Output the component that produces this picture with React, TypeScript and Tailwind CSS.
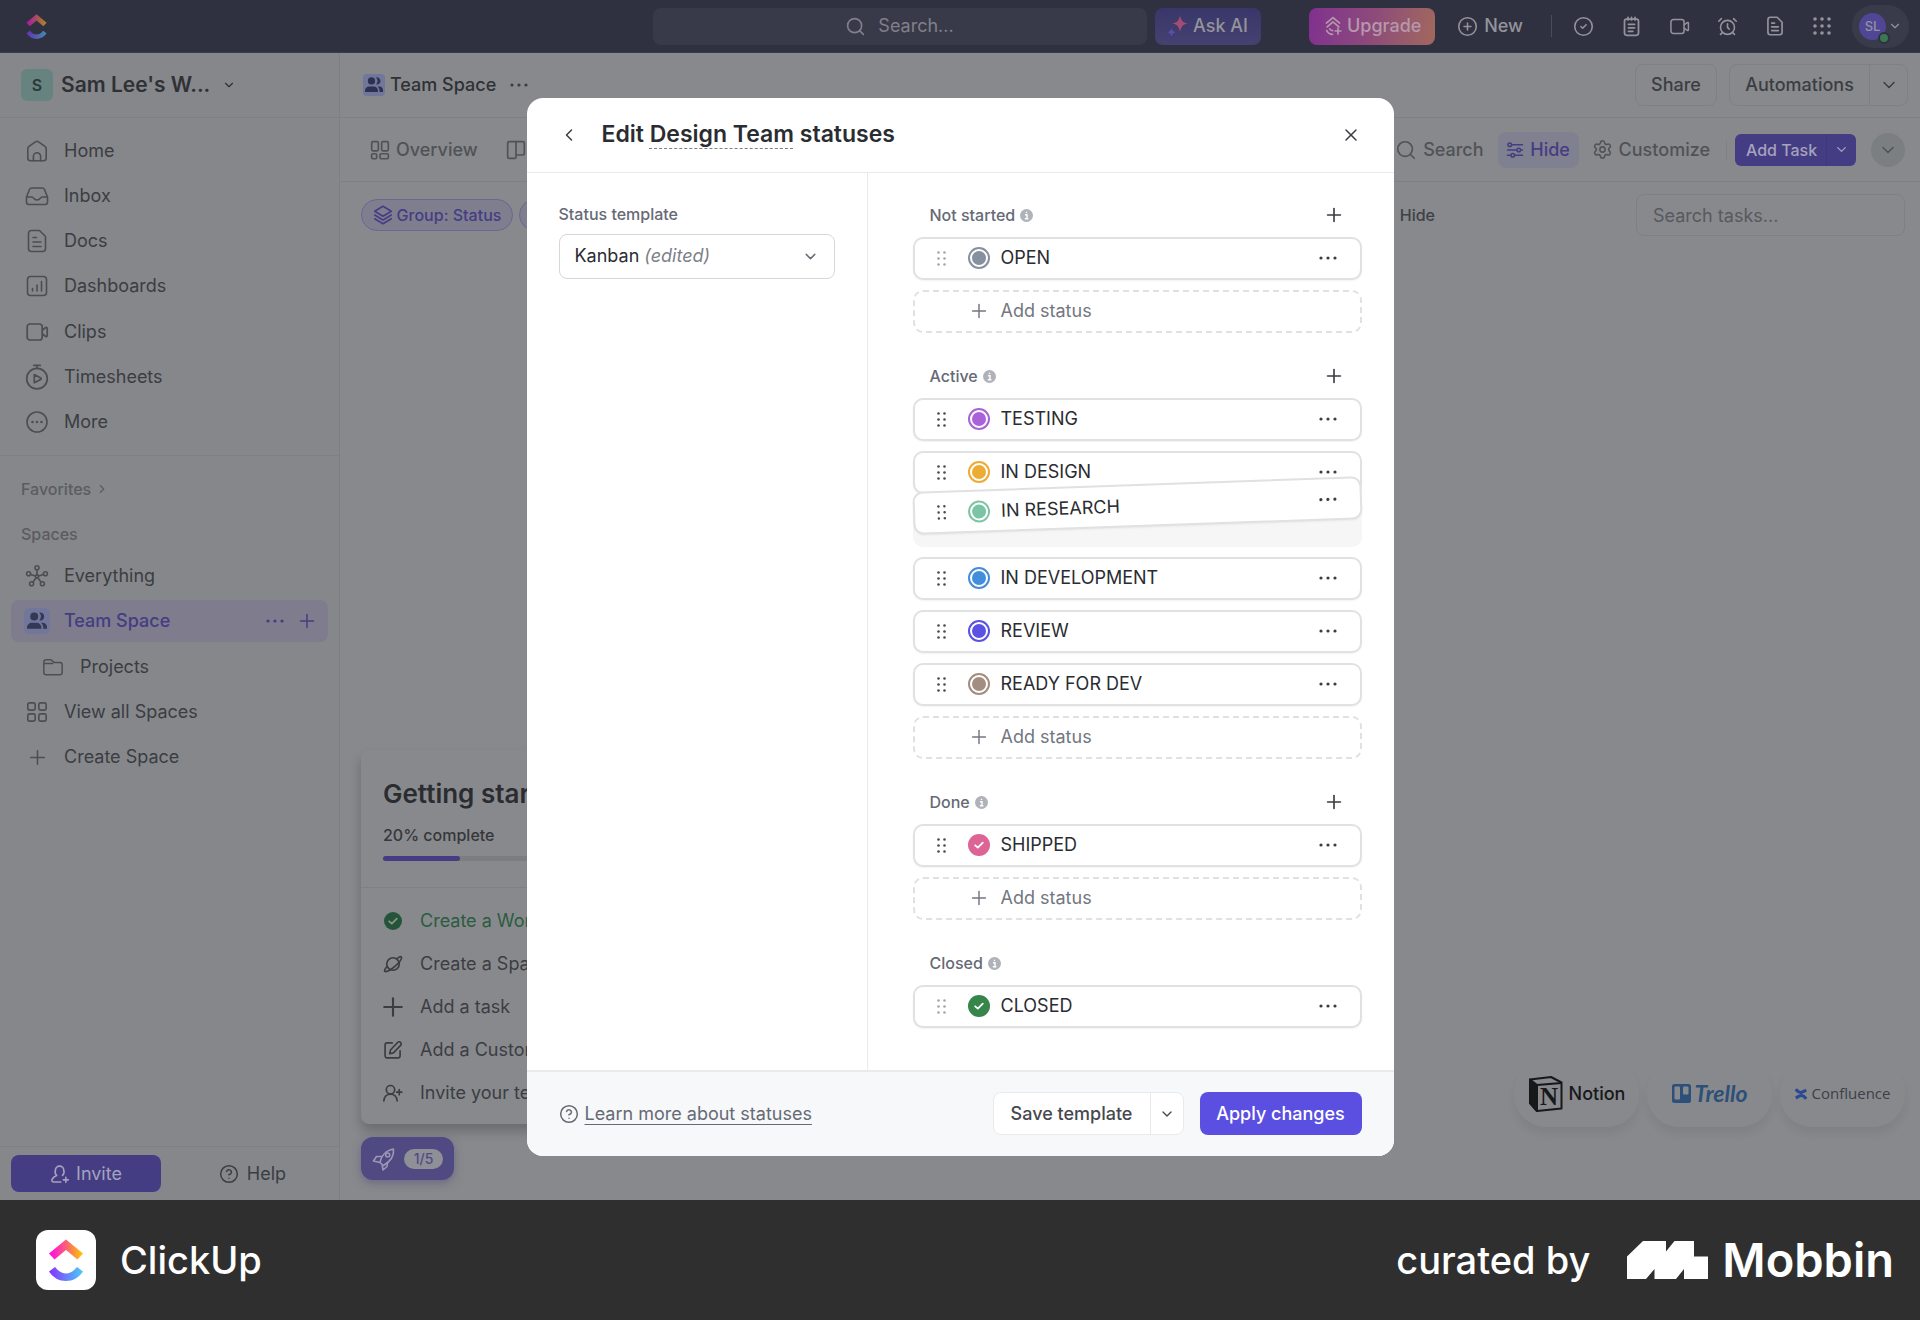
import { ReactNode } from "react";
import {
  AlarmClock,
  ChevronDown,
  ChevronLeft,
  ChevronRight,
  CircleCheck,
  CircleHelp,
  CirclePlus,
  Plus,
  Search,
  Settings,
  X
} from "lucide-react";

function Icon({ size = 24, stroke = 2, children }: { size?: number; stroke?: number; children: ReactNode }) {
  return (
    <svg
      width={size}
      height={size}
      viewBox="0 0 24 24"
      fill="none"
      stroke="currentColor"
      strokeWidth={stroke}
      strokeLinecap="round"
      strokeLinejoin="round"
      className="shrink-0"
      aria-hidden="true"
    >
      {children}
    </svg>
  );
}

const HomeIcon = () => (
  <Icon stroke={1.6}>
    <path d="M2.8 9.8a3 3 0 0 1 1.500-2.600l6.200-4.400a2.600 2.600 0 0 1 3 0l6.200 4.400a3 3 0 0 1 1.500 2.600V19a2.8 2.8 0 0 1-2.8 2.8H5.6A2.8 2.8 0 0 1 2.8 19z" />
    <path d="M8.400 21.800v-4.500a3.600 3.600 0 0 1 7.200 0v4.500" />
  </Icon>
);

const InboxIcon = () => (
  <Icon stroke={1.6}>
    <path d="m1.5 13 3-7.5A2.5 2.5 0 0 1 6.8 4h10.4a2.5 2.5 0 0 1 2.3 1.5l3 7.5v5a2.5 2.5 0 0 1-2.5 2.500H4A2.5 2.5 0 0 1 1.5 18z" />
    <path d="M1.7 13h5.1c1 0 1.3.4 1.8 1.2.8 1.3 1.7 1.8 3.4 1.8s2.6-.5 3.4-1.8c.5-.8.8-1.2 1.8-1.2h5.1" />
  </Icon>
);

const DocIcon = ({ size = 24, stroke = 1.6 }: { size?: number; stroke?: number }) => (
  <Icon size={size} stroke={stroke}>
    <path d="M3.5 4.5A3 3 0 0 1 6.500 1.500h8l6 6v12a3 3 0 0 1-3 3h-11a3 3 0 0 1-3-3z" />
    <path d="M8 8.500h3.500M8 13h8M8 17.500h8" />
  </Icon>
);

const DashboardIcon = () => (
  <Icon stroke={1.6}>
    <rect x="2.5" y="2.5" width="19" height="19" rx="3" />
    <path d="M7.500 14.500v2.500M12 11v6M16.500 7.500V17" />
  </Icon>
);

const ClipIcon = ({ size = 24 }: { size?: number }) => (
  <Icon size={size} stroke={1.7}>
    <rect x="2.2" y="4" width="15" height="16" rx="2.8" />
    <path d="m17.500 10 3.300-2.500c.6-.4 1.400 0 1.400.8v7.400c0 .8-.8 1.200-1.400.8L17.500 14" />
  </Icon>
);

const TimesheetIcon = () => (
  <Icon size={26} stroke={1.6}>
    <circle cx="12" cy="13.5" r="9.5" />
    <path d="M9 1.200h6M12 1.500V4" />
    <path d="m9.500 9.800 6 3.200a.7.7 0 0 1 0 1.200l-6 3.200z" />
  </Icon>
);

const MoreIcon = () => (
  <Icon stroke={1.6}>
    <circle cx="12" cy="12" r="10" />
    <path strokeWidth="2.6" d="M7.500 12h0M12 12h0M16.500 12h0" />
  </Icon>
);

const EverythingIcon = () => (
  <Icon stroke={1.6}>
    <circle cx="12" cy="3.8" r="2" />
    <circle cx="3.6" cy="9.8" r="2" />
    <circle cx="20.4" cy="9.8" r="2" />
    <circle cx="6.6" cy="19.8" r="2" />
    <circle cx="17.4" cy="19.8" r="2" />
    <circle cx="12" cy="12.5" r="1.6" />
    <path d="M12 6v5M5.600 10.400l4.800 1.600M18.400 10.400l-4.800 1.600M8 18l3-4M16 18l-3-4" />
  </Icon>
);

const FolderIcon = () => (
  <Icon size={22} stroke={1.6}>
    <path d="M2 6.500A2.500 2.500 0 0 1 4.500 4h5.300l3.500 3.200h6.200A2.500 2.500 0 0 1 22 9.700v8.300a2.500 2.500 0 0 1-2.500 2.500h-15A2.500 2.500 0 0 1 2 18zM2 8.200h9.500" />
  </Icon>
);

const GridIcon = () => (
  <Icon size={22} stroke={1.8}>
    <rect x="2" y="2" width="8" height="8" rx="1.8" />
    <rect x="14" y="2" width="8" height="8" rx="1.8" />
    <rect x="2" y="14" width="8" height="8" rx="1.8" />
    <rect x="14" y="14" width="8" height="8" rx="1.8" />
  </Icon>
);

const OverviewIcon = () => (
  <Icon size={20} stroke={2}>
    <rect x="2" y="2" width="8" height="11" rx="1.5" />
    <rect x="14" y="2" width="8" height="11" rx="1.5" />
    <rect x="2" y="16.5" width="6" height="6" rx="1.5" />
    <rect x="12" y="16.5" width="10" height="6" rx="1.5" />
  </Icon>
);

const BoardIcon = () => (
  <Icon size={20} stroke={2}>
    <path d="M2 4a2 2 0 0 1 2-2h16a2 2 0 0 1 2 2v12a2 2 0 0 1-2 2h-8v2a2 2 0 0 1-2 2H4a2 2 0 0 1-2-2zM12 2v16" />
  </Icon>
);

const PeopleIcon = ({ size = 18 }: { size?: number }) => (
  <svg width={size} height={size} viewBox="0 0 20 20" fill="currentColor" aria-hidden="true">
    <circle cx="7.2" cy="5.5" r="4" />
    <path d="M12.300 1.600a4 4 0 1 1 0 7.800 6 6 0 0 0 0-7.800z" />
    <path d="M0 16.500a4.700 4.700 0 0 1 4.700-4.700h5a4.700 4.700 0 0 1 4.700 4.700v1.200H0z" />
    <path d="M14 11.800h1.500a4.500 4.500 0 0 1 4.500 4.500v1.400h-3.800v-1.200c0-1.900-.9-3.600-2.200-4.700z" />
  </svg>
);

const LayersIcon = () => (
  <Icon size={20} stroke={1.8}>
    <path d="m12 1.500 10 6-10 6-10-6z" />
    <path d="m2 12 10 6 10-6M2 16.500l10 6 10-6" />
  </Icon>
);

const SlidersIcon = () => (
  <Icon size={18} stroke={2}>
    <circle cx="5" cy="5" r="2.4" />
    <circle cx="17" cy="12" r="2.4" />
    <circle cx="9" cy="19" r="2.4" />
    <path d="M8 5h14M2 12h12M20 12h2M2 19h4M12 19h10" />
  </Icon>
);

const NotepadIcon = () => (
  <Icon size={21} stroke={2}>
    <rect x="4" y="3.5" width="16" height="18.5" rx="2.5" />
    <path d="M8 1.500v3M12 1.500v3M16 1.500v3M8.500 9.500h7M8.500 13.500h7M8.500 17.500h5" />
  </Icon>
);

const AppsIcon = () => (
  <svg width="20" height="20" viewBox="0 0 20 20" fill="currentColor" aria-hidden="true">
    {[3, 10, 17].map((y) => [3, 10, 17].map((x) => <circle key={`${x}-${y}`} cx={x} cy={y} r="1.8" />))}
  </svg>
);

const UpgradeIcon = () => (
  <Icon size={20} stroke={2}>
    <path d="M4 8.500 12 2l8 6.500M5 13l7-6 7 6" />
    <path d="M4.500 17.500a8 8 0 0 0 7 4.500M8 15.500c.8 1 2 1.800 3.500 2M18 14.500v7M14.500 18h7" />
  </Icon>
);

const PlanetIcon = () => (
  <Icon size={20} stroke={2}>
    <circle cx="12" cy="12" r="7.5" />
    <path d="M17 5.500c2.800-2.300 4.500-2.800 5-1.800.9 2-2.400 6.500-7.400 10.900S3.900 22 2.200 20.800c-1-1 .2-3 2.300-5.600" />
  </Icon>
);

const EditIcon = () => (
  <Icon size={20} stroke={2}>
    <path d="M11 3.500H5A2.500 2.500 0 0 0 2.500 6v13A2.500 2.500 0 0 0 5 21.500h13a2.500 2.500 0 0 0 2.500-2.500v-6" />
    <path d="m9 12 8.500-9a2.500 2.500 0 0 1 3.600 3.500L12.500 15.500 8 16.500z" />
  </Icon>
);

const InviteTeamIcon = () => (
  <Icon size={20} stroke={2}>
    <circle cx="9" cy="8" r="5" />
    <path d="M1 21.500c.5-5 3.500-8 8-8s7.500 3 8 8M19.500 8v6M16.500 11h6" />
  </Icon>
);

const InviteIcon = () => (
  <Icon size={20} stroke={1.9}>
    <path d="M13 21.500H4.500c-2 0-2.700-1.500-2-3 1-2.500 3-4 5.500-4.800A6 6 0 0 1 6.500 7.500a5 5 0 0 1 10 0 6 6 0 0 1-1.500 6.200M19 16v6M16 19h6" />
  </Icon>
);

const RocketIcon = () => (
  <Icon size={24} stroke={1.6}>
    <path d="M8 15.500c1-5.500 5-12 13.500-13.500.8 7.500-4 13-10 16.500z" />
    <circle cx="15.7" cy="8" r="2" />
    <path d="M9.500 9.500 4.500 9.500 1.500 14l6.500 1.500M15.500 15.500l-.5 4-4 3.500-.8-5" />
  </Icon>
);

const DotsIcon = () => (
  <svg width="22" height="22" viewBox="0 0 22 22" fill="currentColor" aria-hidden="true">
    <circle cx="4" cy="11" r="1.6" />
    <circle cx="11" cy="11" r="1.6" />
    <circle cx="18" cy="11" r="1.6" />
  </svg>
);

function ClickUpMark({ size, id }: { size: number; id: string }) {
  return (
    <svg width={size} height={size} viewBox="0 0 36 42" aria-hidden="true">
      <defs>
        <linearGradient id={`${id}-top`} x1="0" x2="1">
          <stop offset="0" stopColor="#ff02f0" />
          <stop offset=".55" stopColor="#fb6a69" />
          <stop offset="1" stopColor="#ffc800" />
        </linearGradient>
        <linearGradient id={`${id}-bottom`} x1="0" x2="1">
          <stop offset="0" stopColor="#8930fd" />
          <stop offset="1" stopColor="#49ccf9" />
        </linearGradient>
      </defs>
      <path d="m1 14.500 17-14 17 14-5.500 6L18 11 6.500 20.500z" fill={`url(#${id}-top)`} />
      <path d="M1 32.500 7 28c3.500 4.400 7 6.400 11 6.400s7.500-2 11-6.400l6 4.500C30.500 39 25 42 18 42S5.500 39 1 32.500z" fill={`url(#${id}-bottom)`} />
    </svg>
  );
}

function TopBar() {
  return (
    <header className="flex h-[53px] items-center border-b border-[#3c3d4b] bg-[#303140] pr-[11px] pl-1 text-lg font-medium text-[#93949b]">
      <div className="flex flex-1 items-center">
        <span className="ml-5 opacity-60">
          <ClickUpMark size={25} id="bar" />
        </span>
      </div>
      <div className="flex items-center gap-2">
        <button className="flex h-[37px] w-[494px] items-center justify-center gap-3 rounded-lg bg-[#393a49] font-normal text-[#7f8089]">
          <Search size={21} strokeWidth={1.8} />
          Search...
        </button>
        <button className="flex h-[37px] w-[106px] items-center justify-center gap-1 rounded-lg bg-linear-to-b from-[#39366a] to-[#454170]">
          <svg width="22" height="22" viewBox="0 0 22 22" aria-hidden="true">
            <path d="M13 0c1 5.500 2.500 7.500 7.500 8.500C15.500 9.500 14 12 13 17c-1-5-2.500-7.500-7.500-8.500C10.500 7.500 12 5.500 13 0z" fill="#a34c74" />
            <path d="M4.500 13c.5 2.500 1.500 3.500 4 4.200-2.500.8-3.500 1.800-4 4.300-.5-2.500-1.500-3.500-4-4.300 2.500-.7 3.500-1.700 4-4.200z" fill="#594db0" />
          </svg>
          Ask AI
        </button>
      </div>
      <div className="flex flex-1 items-center justify-end">
        <button className="mr-4 flex h-[37px] w-[126px] items-center justify-center gap-1 rounded-lg bg-linear-100 from-[#80308f] via-[#8d4a7a] to-[#a2685c] text-[#b698ad]">
          <UpgradeIcon />
          Upgrade
        </button>
        <button className="mr-7 ml-[6px] flex items-center gap-[6px]">
          <CirclePlus size={21} strokeWidth={1.8} />
          New
        </button>
        <span className="h-[22px] w-px bg-[#4b4c59]" />
        <div className="mr-5 ml-[21px] flex items-center gap-[27px]">
          <button aria-label="Tasks"><CircleCheck size={21} strokeWidth={1.8} /></button>
          <button aria-label="Notepad"><NotepadIcon /></button>
          <button aria-label="Record clip"><ClipIcon size={21} /></button>
          <button aria-label="Reminders"><AlarmClock size={21} strokeWidth={1.8} /></button>
          <button aria-label="Docs"><DocIcon size={20} stroke={2} /></button>
          <button aria-label="Apps"><AppsIcon /></button>
        </div>
        <button className="flex h-[43px] w-[57px] items-center justify-center gap-[2px] rounded-full bg-[#3a3b4a]">
          <span className="relative flex size-[27px] items-center justify-center rounded-full bg-[#4f4796] text-[13px]">
            SL
            <span className="absolute -right-1 -bottom-1 size-3 rounded-full border-2 border-[#303140] bg-[#3a7752]" />
          </span>
          <ChevronDown size={14} />
        </button>
      </div>
    </header>
  );
}

function NavItem({ icon, label, active, nested, children }: { icon: ReactNode; label: string; active?: boolean; nested?: boolean; children?: ReactNode }) {
  return (
    <li className="flex flex-1 items-center">
      <div
        className={`flex h-[42px] w-full items-center gap-[14px] rounded-lg pr-[10px] ${nested ? "pl-[29px]" : "pl-[13px]"} ${
          active ? "bg-[#7e7c8d] font-medium text-[#443d83]" : "text-[#3b3d42]"
        }`}
      >
        <a href="#" className="flex flex-1 items-center gap-[14px]">
          <span className={`flex w-[26px] justify-center ${active ? "" : "text-[#4c4e54]"}`}>{icon}</span>
          {label}
        </a>
        {children}
      </div>
    </li>
  );
}

function Sidebar() {
  return (
    <aside className="flex w-[340px] shrink-0 flex-col border-r border-[#7e8084] bg-[#85878b] text-lg">
      <button className="flex h-[65px] items-center border-b border-[#7e8084] px-[21px] text-[#2f3135]">
        <span className="flex size-8 items-center justify-center rounded-md bg-[#66837f] text-base font-semibold text-[#283a38]">S</span>
        <span className="ml-2 text-[21px] font-semibold">Sam Lee's W...</span>
        <ChevronDown size={14} className="ml-3" />
      </button>
      <nav className="border-b border-[#7e8084] px-[11px] pt-[10px] pb-[10px]">
        <ul className="flex h-[317px] flex-col">
          <NavItem icon={<HomeIcon />} label="Home" />
          <NavItem icon={<InboxIcon />} label="Inbox" />
          <NavItem icon={<DocIcon />} label="Docs" />
          <NavItem icon={<DashboardIcon />} label="Dashboards" />
          <NavItem icon={<ClipIcon />} label="Clips" />
          <NavItem icon={<TimesheetIcon />} label="Timesheets" />
          <NavItem icon={<MoreIcon />} label="More" />
        </ul>
      </nav>
      <div className="flex-1 px-[11px] pt-[22px]">
        <button className="flex items-center gap-1 px-[10px] text-base leading-[22px] font-medium text-[#5a5c61]">
          Favorites
          <ChevronRight size={14} />
        </button>
        <h2 className="mt-[23px] px-[10px] text-base leading-[22px] font-medium text-[#5a5c61]">Spaces</h2>
        <ul className="mt-[8px] flex h-[227px] flex-col">
          <NavItem icon={<EverythingIcon />} label="Everything" />
          <NavItem
            icon={
              <span className="flex size-[26px] items-center justify-center rounded-md bg-[#71779b] text-[#343854]">
                <PeopleIcon size={20} />
              </span>
            }
            label="Team Space"
            active
          >
            <button aria-label="Space settings"><DotsIcon /></button>
            <button aria-label="Add to space" className="-ml-1"><Plus size={22} strokeWidth={1.6} /></button>
          </NavItem>
          <NavItem icon={<FolderIcon />} label="Projects" nested />
          <NavItem icon={<GridIcon />} label="View all Spaces" />
          <NavItem icon={<Plus size={23} strokeWidth={1.6} />} label="Create Space" />
        </ul>
      </div>
      <div className="flex h-[54px] items-center border-t border-[#7e8084] px-[11px]">
        <button className="flex h-[37px] w-[150px] items-center justify-center gap-[6px] rounded-lg bg-[#443d83] text-[#a5a3bd]">
          <InviteIcon />
          Invite
        </button>
        <button className="flex flex-1 items-center justify-center gap-2 pl-4 text-[#3b3d42]">
          <CircleHelp size={20} strokeWidth={1.8} />
          Help
        </button>
      </div>
    </aside>
  );
}

function SpaceBar() {
  return (
    <div className="flex h-[65px] shrink-0 items-center justify-between border-b border-[#7e8084] pr-3 pl-[23px] text-lg font-medium text-[#3b3d42]">
      <div className="flex items-center">
        <span className="flex size-[22px] items-center justify-center rounded bg-[#71779b] text-[#2d3150]">
          <PeopleIcon />
        </span>
        <span className="ml-[5px] text-[#2f3135]">Team Space</span>
        <button aria-label="More" className="ml-3"><DotsIcon /></button>
      </div>
      <div className="flex gap-3">
        <button className="h-[42px] w-[82px] rounded-lg border border-[#7e8084]">Share</button>
        <div className="flex h-[42px] rounded-lg border border-[#7e8084]">
          <button className="w-[139px]">Automations</button>
          <button aria-label="Automation options" className="flex w-[38px] items-center justify-center border-l border-[#7e8084]">
            <ChevronDown size={20} strokeWidth={1.7} />
          </button>
        </div>
      </div>
    </div>
  );
}

function ViewBar() {
  return (
    <div className="flex h-16 shrink-0 items-center justify-between border-b border-[#7e8084] pr-[15px] pl-[30px] text-lg font-medium text-[#505257]">
      <div className="flex items-center gap-[28px]">
        <a href="#" className="flex items-center gap-[6px]"><OverviewIcon />Overview</a>
        <a href="#" className="flex items-center gap-[6px]"><BoardIcon />Board</a>
      </div>
      <div className="flex items-center">
        <button className="flex items-center gap-[6px]">
          <Search size={22} strokeWidth={1.8} />
          Search
        </button>
        <button className="mr-[13px] ml-[14px] flex h-9 w-[81px] items-center justify-center gap-[6px] rounded-lg bg-[#808190] text-[#443d83]">
          <SlidersIcon />
          Hide
        </button>
        <button className="flex items-center gap-[6px]">
          <Settings size={21} strokeWidth={1.8} />
          Customize
        </button>
        <span className="mr-2 ml-4 h-5 w-px bg-[#7e8084]" />
        <div className="flex h-8 items-center rounded-md bg-[#443d83] text-[#a5a3bd]">
          <button className="w-[91px] pl-[2px] text-base">Add Task</button>
          <button aria-label="Task options" className="flex h-full w-[30px] items-center justify-center border-l border-[#3e3878]">
            <ChevronDown size={15} />
          </button>
        </div>
        <button aria-label="Collapse" className="ml-[15px] flex size-[34px] items-center justify-center rounded-full bg-[#7c7f82]">
          <ChevronDown size={20} strokeWidth={1.7} />
        </button>
      </div>
    </div>
  );
}

function FilterBar() {
  return (
    <div className="flex h-[66px] shrink-0 items-center pr-[15px] pl-[21px] text-base font-medium">
      <button className="flex h-8 w-[152px] items-center justify-center gap-1 rounded-full border border-[#6b6793] bg-[#7f7e8f] text-[#443d83]">
        <LayersIcon />
        Group: Status
      </button>
      <button aria-label="Subtasks" className="ml-[6px] h-8 w-[140px] rounded-full border border-[#6b6793] bg-[#7f7e8f]" />
      <button className="ml-auto text-[#3f4145]">Hide</button>
      <input
        aria-label="Search tasks"
        placeholder="Search tasks..."
        className="ml-[201px] h-[42px] w-[269px] rounded-lg border border-[#7e8084] px-4 text-lg font-normal outline-none placeholder:text-[#57595e]"
      />
    </div>
  );
}

const steps = [
  { label: "Create a Workspace", icon: <CheckDot className="size-[18px] bg-[#24553a] text-[#8e9092]" />, done: true },
  { label: "Create a Space", icon: <PlanetIcon /> },
  { label: "Add a task", icon: <Plus size={30} strokeWidth={1.7} className="-m-1 shrink-0" /> },
  { label: "Add a Custom Field", icon: <EditIcon /> },
  { label: "Invite your team", icon: <InviteTeamIcon /> }
];

function GettingStarted() {
  return (
    <div>
      <section className="w-[427px] rounded-lg bg-[#88898d] pt-6 pb-[10px] shadow-[0_7px_12px_rgba(0,0,0,0.22)]">
        <div className="border-b border-[#7e8084] px-[22px] pb-[26px]">
          <h2 className="text-[26px] leading-10 font-semibold text-[#2a2c30]">Getting started</h2>
          <p className="mt-[10px] text-base leading-[22px] font-medium text-[#35373b]">20% complete</p>
          <div className="mt-[10px] h-[5px] rounded-full bg-[#7c7d81]">
            <div className="h-full w-1/5 rounded-full bg-[#443d83]" />
          </div>
        </div>
        <ul className="px-[22px] pt-[11px] text-lg">
          {steps.map((step) => (
            <li key={step.label} className={`flex h-[43px] items-center gap-[17px] ${step.done ? "text-[#2b5c42]" : "text-[#3b3d42]"}`}>
              <span className="flex w-5 justify-center">{step.icon}</span>
              {step.label}
            </li>
          ))}
        </ul>
      </section>
      <button className="mt-[13px] flex h-[43px] w-[93px] items-center justify-center gap-2 rounded-xl bg-[#504a82] text-[#9a98b5] shadow-[0_3px_8px_rgba(80,74,130,0.5)]">
        <RocketIcon />
        <span className="flex h-5 w-[39px] items-center justify-center rounded-full bg-[#8e8f97] text-sm font-medium text-[#504a82]">1/5</span>
      </button>
    </div>
  );
}

function ImportSources() {
  return (
    <div className="flex gap-2">
      <div className="flex h-[67px] w-[125px] items-center justify-center gap-[5px] rounded-[32px] bg-[#88898d] text-lg font-medium text-[#17181a] shadow-[0_7px_9px_rgba(0,0,0,0.06)]">
        <svg width="36" height="38" viewBox="0 0 36 38" aria-hidden="true">
          <path d="M2 4.500 23 2l10.500 5.500V33.500L9 36 2 28z" fill="#88898d" stroke="#17181a" strokeWidth="2" strokeLinejoin="round" />
          <path d="M2 4.500 9 10v26l-7-8zM9 10l24.500-2" fill="#17181a" stroke="#17181a" strokeWidth="2" strokeLinejoin="round" />
          <text x="21" y="30" textAnchor="middle" fontFamily="Liberation Serif" fontWeight="700" fontSize="25" fill="#17181a">N</text>
        </svg>
        Notion
      </div>
      <div className="flex h-[67px] w-[125px] items-center justify-center gap-1 rounded-[32px] bg-[#88898d] font-['Lato',sans-serif] text-[23px] font-bold text-[#2c5078] italic shadow-[0_7px_9px_rgba(0,0,0,0.06)]">
        <svg width="19" height="19" viewBox="0 0 19 19" aria-hidden="true">
          <rect width="19" height="19" rx="2.5" fill="#2c5078" />
          <rect x="2.5" y="2.5" width="5.5" height="13" rx="1" fill="#88898d" />
          <rect x="11" y="2.5" width="5.5" height="8" rx="1" fill="#88898d" />
        </svg>
        Trello
      </div>
      <div className="flex h-[67px] w-[125px] items-center justify-center gap-[5px] rounded-[32px] bg-[#88898d] font-['Open_Sans',sans-serif] text-[15px] text-[#3b4048] shadow-[0_7px_9px_rgba(0,0,0,0.06)]">
        <svg width="12" height="12" viewBox="0 0 12 12" fill="none" stroke="#2b4891" strokeWidth="3.2" aria-hidden="true">
          <path d="M.8 1.200C3 4.200 4 4.700 6 4.500s3.500-1.700 5.300-2.300M11.200 10.800C9 7.800 8 7.300 6 7.500S2.500 9.200.7 9.800" />
        </svg>
        Confluence
      </div>
    </div>
  );
}

function CheckDot({ className }: { className: string }) {
  return (
    <span className={`flex shrink-0 items-center justify-center rounded-full ${className}`}>
      <Icon size={14} stroke={3}>
        <path d="m5.500 12.500 4.500 4 8.500-8.500" />
      </Icon>
    </span>
  );
}

function Grip() {
  return (
    <svg width="9" height="15" viewBox="0 0 9 15" fill="currentColor" aria-hidden="true">
      {[1.5, 7.5, 13.5].map((y) => [1.5, 7.5].map((x) => <circle key={`${x}-${y}`} cx={x} cy={y} r="1.3" />))}
    </svg>
  );
}

type Status = { name: string; color: string; fixed?: boolean; dragging?: boolean; check?: boolean };

const groups: { title: string; statuses: Status[]; closed?: boolean }[] = [
  { title: "Not started", statuses: [{ name: "OPEN", color: "text-[#87909e]", fixed: true }] },
  {
    title: "Active",
    statuses: [
      { name: "TESTING", color: "text-[#aa62d9]" },
      { name: "IN DESIGN", color: "text-[#ecab34]" },
      { name: "IN RESEARCH", color: "text-[#7bc4a6]", dragging: true },
      { name: "IN DEVELOPMENT", color: "text-[#438edc]" },
      { name: "REVIEW", color: "text-[#5b51e2]" },
      { name: "READY FOR DEV", color: "text-[#a38d80]" }
    ]
  },
  { title: "Done", statuses: [{ name: "SHIPPED", color: "bg-[#dc6596]", check: true }] },
  { title: "Closed", statuses: [{ name: "CLOSED", color: "bg-[#36854a]", check: true, fixed: true }], closed: true }
];

function StatusCard({ status }: { status: Status }) {
  return (
    <div className="flex h-[43px] w-full items-center rounded-[10px] border-2 border-[#e0e1e3] bg-white pr-[21px] pl-[22px] shadow-[0_1px_2px_rgba(0,0,0,0.05)]">
      <span className={status.fixed ? "text-[#a5a6aa]" : "text-[#4a4b50]"}>
        <Grip />
      </span>
      {status.check ? (
        <CheckDot className={`ml-[22px] size-[22px] text-white ${status.color}`} />
      ) : (
        <span className={`ml-[22px] flex size-[22px] items-center justify-center rounded-full border-2 border-current ${status.color}`}>
          <span className="size-[14px] rounded-full bg-current" />
        </span>
      )}
      <span className="ml-[11px] flex-1 text-lg text-[#2a2c31]">{status.name}</span>
      <button aria-label={`${status.name} options`} className="text-[#3b3d42]">
        <DotsIcon />
      </button>
    </div>
  );
}

function StatusRow({ status }: { status: Status }) {
  if (!status.dragging) return <StatusCard status={status} />;
  return (
    <div className="relative z-10 h-[43px] rounded-[10px] bg-[#f6f6f7]">
      <div className="absolute inset-x-0 -top-5 -rotate-2">
        <StatusCard status={status} />
      </div>
    </div>
  );
}

function StatusModal() {
  return (
    <div role="dialog" aria-label="Edit statuses" className="w-[867px] overflow-hidden rounded-2xl bg-white">
      <header className="flex h-[75px] items-center border-b border-[#e8eaed] pr-[33px] pl-8 text-[#3b3d42]">
        <button aria-label="Back"><ChevronLeft size={20} strokeWidth={1.8} /></button>
        <h1 className="ml-[23px] flex-1 text-[23px] font-semibold text-[#2a2c31]">
          Edit{" "}
          <span className="underline decoration-[#7c7f88] decoration-dashed decoration-1 underline-offset-[6px] [text-decoration-skip-ink:none]">Design Team</span>{" "}
          statuses
        </h1>
        <button aria-label="Close"><X size={20} strokeWidth={1.8} /></button>
      </header>
      <div className="flex">
        <div className="w-[341px] shrink-0 border-r border-[#e8eaed] px-8 pt-[29px]">
          <label htmlFor="template" className="block text-base leading-6 font-medium text-[#656a75]">Status template</label>
          <div className="relative mt-[8px] flex h-[45px] items-center rounded-lg border border-[#d5d7da] px-[15px] text-lg text-[#2a2c31]">
            <span className="flex-1">
              Kanban <em className="text-[#7c7f88]">(edited)</em>
            </span>
            <ChevronDown size={17} className="text-[#656a75]" />
            <select id="template" className="absolute inset-0 w-full opacity-0">
              <option>Kanban</option>
            </select>
          </div>
        </div>
        <div className="flex flex-1 flex-col gap-[22px] pt-[21px] pr-8 pb-[42px] pl-[45px]">
          {groups.map((group) => (
            <section key={group.title}>
              <div className="flex h-[43px] items-center justify-between pr-[17px] pl-[17px] text-base font-medium text-[#656a75]">
                <h2 className="flex items-center gap-[5px]">
                  {group.title}
                  <svg width="13" height="13" viewBox="0 0 13 13" aria-hidden="true">
                    <circle cx="6.5" cy="6.5" r="6.5" fill="#b0b2b9" />
                    <path d="M5 5.800h2v4M4.800 9.800h3.600M6.500 2.800v1.200" stroke="#fff" strokeWidth="1.4" fill="none" />
                  </svg>
                </h2>
                {!group.closed && (
                  <button aria-label={`Add ${group.title} status`} className="text-[#3b3d42]">
                    <Plus size={22} strokeWidth={1.8} />
                  </button>
                )}
              </div>
              <div className="flex flex-col gap-[10px]">
                {group.statuses.map((status) => (
                  <StatusRow key={status.name} status={status} />
                ))}
                {!group.closed && (
                  <button className="flex h-[43px] items-center gap-[11px] rounded-[10px] border-2 border-dashed border-[#e0e1e3] pl-[53px] text-lg text-[#73777f]">
                    <Plus size={22} strokeWidth={1.6} />
                    Add status
                  </button>
                )}
              </div>
            </section>
          ))}
        </div>
      </div>
      <footer className="flex h-[86px] items-center border-t-2 border-[#e8eaed] bg-[#f7f8fa] px-8 text-lg">
        <a href="#" className="flex flex-1 items-center gap-[6px] text-[#656a75]">
          <CircleHelp size={20} strokeWidth={1.8} />
          <span className="underline decoration-1 underline-offset-4">Learn more about statuses</span>
        </a>
        <div className="flex h-[43px] rounded-lg border border-[#e8eaed] bg-white font-medium text-[#46484e]">
          <button className="w-[156px]">Save template</button>
          <button aria-label="Save options" className="flex w-[33px] items-center justify-center border-l border-[#e8eaed]">
            <ChevronDown size={16} />
          </button>
        </div>
        <button className="ml-4 h-[43px] w-[162px] rounded-lg bg-[#5b4fe2] font-medium text-white">Apply changes</button>
      </footer>
    </div>
  );
}

function Credits() {
  return (
    <footer className="flex h-[120px] shrink-0 items-center justify-between bg-[#2f2f2f] pr-[26px] pl-9 text-[38px] font-medium text-white">
      <div className="flex items-center gap-6">
        <span className="flex size-[60px] items-center justify-center rounded-xl bg-white">
          <ClickUpMark size={42} id="app" />
        </span>
        ClickUp
      </div>
      <div className="flex items-center">
        curated by
        <svg width="81" height="38" viewBox="0 0 81 38" fill="#fff" className="ml-[37px]" aria-hidden="true">
          <path d="M0 15.500 16 0h23v10.500L47.500 0H67v15.500h14V38H57V28l-8 10H27.500V28L19 38H0z" />
        </svg>
        <span className="ml-[14px] text-[47px] font-semibold">Mobbin</span>
      </div>
    </footer>
  );
}

export default function App() {
  return (
    <div className="flex min-h-screen flex-col font-['Inter',sans-serif]">
      <TopBar />
      <div className="relative flex flex-1">
        <Sidebar />
        <main className="flex min-w-0 flex-1 flex-col bg-[#87898c]">
          <SpaceBar />
          <ViewBar />
          <FilterBar />
          <div className="mt-auto flex items-end justify-between pr-[15px] pl-[21px]">
            <div className="pb-5"><GettingStarted /></div>
            <div className="pb-[73px]"><ImportSources /></div>
          </div>
        </main>
        <div className="absolute inset-0 flex items-center justify-center">
          <StatusModal />
        </div>
      </div>
      <Credits />
    </div>
  );
}
